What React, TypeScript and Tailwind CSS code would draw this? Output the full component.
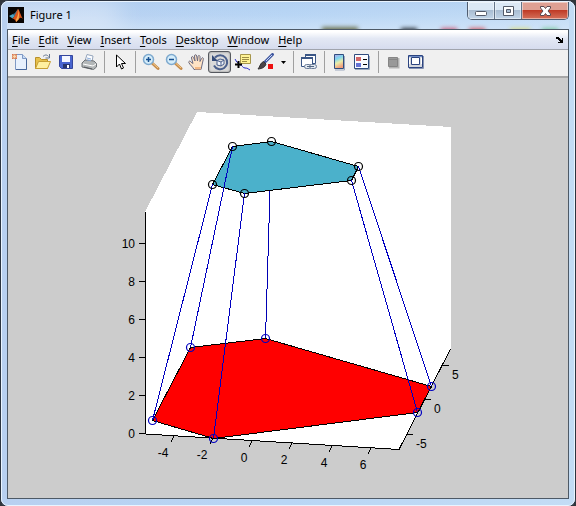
import type { ReactNode } from 'react';
import { clsx } from 'clsx';

const menus = ['File', 'Edit', 'View', 'Insert', 'Tools', 'Desktop', 'Window', 'Help'];

type Point = [number, number];

const topFace: Point[] = [[212, 184], [232, 146], [271, 141], [358, 166], [351, 180], [244, 193]];
const baseFace: Point[] = [[152, 420], [190, 347], [265, 338], [431, 386], [417, 412], [213, 438]];

const zTicks = [
  { label: '0', y: 434 },
  { label: '2', y: 396 },
  { label: '4', y: 358 },
  { label: '6', y: 320 },
  { label: '8', y: 282 },
  { label: '10', y: 244 },
];

const xTicks = [
  { label: '-4', x: 174, y: 436 },
  { label: '-2', x: 213, y: 438 },
  { label: '0', x: 252, y: 441 },
  { label: '2', x: 292, y: 443 },
  { label: '4', x: 332, y: 446 },
  { label: '6', x: 371, y: 448 },
];

const yTicks = [
  { label: '5', x: 443, y: 365 },
  { label: '0', x: 425, y: 399 },
  { label: '-5', x: 407, y: 434 },
];

const toPoints = (pts: Point[]) => pts.map((p) => p.join(',')).join(' ');

export default function App() {
  return (
    <div className="flex min-h-screen flex-col bg-[#30353b] font-['Noto_Sans','Open_Sans',sans-serif] text-[11px] text-black">
      <div className="flex flex-1 flex-col rounded-lg border border-[#2c3440] bg-[#b5cfef]">
        <div className="flex flex-1 flex-col rounded-[7px] border border-[#e9f4ff] bg-linear-to-r from-[#b8d0f0] via-[#b9d6f5] to-[#c3dcf5] px-[5px] pb-[6px]">
          <TitleBar />
          <main className="flex flex-1 flex-col border border-[#4d5966] bg-[#cccccc]">
            <MenuBar />
            <Toolbar />
            <Plot />
          </main>
        </div>
      </div>
    </div>
  );
}

function TitleBar() {
  return (
    <header className="relative flex h-[27px] items-start justify-between overflow-hidden">
      <div className="pointer-events-none absolute inset-0">
        <div className="absolute inset-0 bg-linear-to-b from-[#a9c9ee]/40 via-transparent to-[#dbeafa]/50" />
        <div className="absolute top-0 left-0 h-7 w-28 bg-white/40 blur-md" />
        <div className="absolute top-[25px] left-[56%] h-3 w-9 bg-[#6f7657] blur-[2px]" />
        <div className="absolute top-[26px] right-[27%] h-3 w-4 bg-[#2f3740] blur-[2px]" />
        <div className="absolute top-[26px] right-[20%] h-3 w-4 bg-[#c9607c] blur-[2px]" />
        <div className="absolute top-[26px] right-[15%] h-3 w-4 bg-[#d3606a] blur-[2px]" />
        <div className="absolute top-[26px] right-[7%] h-3 w-5 bg-[#d8dc8a] blur-[2px]" />
        <div className="absolute top-[26px] right-[2%] h-3 w-4 bg-[#7fc9a4] blur-[2px]" />
      </div>
      <div className="relative flex items-center gap-[6px] pt-[5px] pl-px">
        <MatlabIcon />
        <h1 className="text-[11px] leading-4">Figure 1</h1>
      </div>
      <div className="relative flex h-[18px] overflow-hidden rounded-b-[5px] border border-t-0 border-[#4f5d70]">
        <CaptionButton label="Minimize">
          <rect x="6.5" y="8.5" width="11" height="4" rx="1" fill="#fff" stroke="#535a68" />
        </CaptionButton>
        <CaptionButton label="Maximize">
          <path d="M7.500 3.500h10v9h-10zM10.500 6.500v3h4v-3z" fill="#fff" fillRule="evenodd" stroke="#535a68" />
        </CaptionButton>
        <CaptionButton label="Close" close>
          <path
            d="M7.500 3.500h3.500l1.500 2 1.500-2h3.500v1.500L15 8l2.500 3v1.500H14l-1.500-2-1.500 2H7.500V11L10 8 7.500 5z"
            fill="#fff"
            stroke="#5b4950"
          />
        </CaptionButton>
      </div>
    </header>
  );
}

function CaptionButton({ label, close, children }: { label: string; close?: boolean; children: ReactNode }) {
  return (
    <button
      aria-label={label}
      className={clsx(
        'flex h-full items-center justify-center shadow-[inset_0_0_0_1px_rgba(255,255,255,0.45)]',
        close
          ? 'w-[46px] bg-linear-to-b from-[#dfa093] from-45% via-[#bf3b26] via-50% to-[#d5705a]'
          : 'w-[27px] border-r border-[#64758a] bg-linear-to-b from-[#dbe8f5] from-45% via-[#a9bdd2] via-50% to-[#c3d6e9]'
      )}
    >
      <svg viewBox="0 0 24 16" className="h-4 w-6 shrink-0">{children}</svg>
    </button>
  );
}

function MatlabIcon() {
  return (
    <svg viewBox="0 0 16 16" className="size-4" aria-hidden="true">
      <rect width="16" height="16" fill="#080504" />
      <path d="M1 9l4-2 2 2-2.500 2.500z" fill="#4aa3c4" />
      <path d="M5 7c2 0 3-3 5-5L8.500 8 6.500 9.500z" fill="#347392" />
      <path d="M4.500 11.500C7 10 8 5 10 2c1.500 1 2.500 6 5 10-2-2-3-1.500-4.500.500L8 15c-.500-2-1.500-3-3.500-3.500z" fill="#d9541c" />
      <path d="M10 2c.500 3 .500 6-2 10.500V15l2.500-2.500C11.500 9 11 4 10 2z" fill="#f8a848" />
    </svg>
  );
}

function MenuBar() {
  return (
    <nav
      aria-label="Menu bar"
      className="flex h-5 items-center justify-between border-b border-[#a0a4ad] bg-linear-to-b from-white from-10% via-[#e3e8f4] via-45% to-[#d6dcee] px-1"
    >
      <div className="flex gap-[9px]">
        {menus.map((name) => (
          <button key={name} className="leading-4">
            <span className="underline underline-offset-2">{name[0]}</span>
            {name.slice(1)}
          </button>
        ))}
      </div>
      <button aria-label="Dock figure">
        <svg viewBox="0 0 8 8" className="size-2" shapeRendering="crispEdges">
          <path d="M0 1h3v1h1v1h1v1h1V2h1v5H2V6h2V5H3V4H2V3H0z" />
        </svg>
      </button>
    </nav>
  );
}

function Toolbar() {
  return (
    <div role="toolbar" className="flex h-7 items-center border-b-2 border-[#a7a7a7] bg-[#f0f0f0] pb-[2px]">
      <Tool label="New figure">
        <path d="M4.500 1.500h7l4 4v11h-11z" fill="#e8f1fd" stroke="#7f99c4" />
        <path d="M5 16.500h10.500v-11" fill="none" stroke="#48689c" />
        <path d="M11.500 1.500v4h4" fill="#cadcf3" stroke="#7f99c4" />
        <circle cx="3.500" cy="3.500" r="2" fill="#fbd7a8" stroke="#d9764a" />
        <path d="M1 1l1 1M6 1L5 2M1 6l1-1M6 6L5 5" stroke="#d9764a" />
      </Tool>
      <Tool label="Open file">
        <path d="M1.500 15.500v-11h4l2 2h6v9z" fill="#e7c14b" stroke="#b8902a" />
        <path d="M1.500 15.500l3-7h12l-3 7z" fill="#fff0a0" stroke="#c79f35" />
        <path d="M9 3.500c2-2 4-2 5.500 0M15.500 1v4h-4" fill="none" stroke="#667690" />
      </Tool>
      <Tool label="Save figure">
        <path d="M2.500 2.500h13v13h-11l-2-2z" fill="#4965cf" stroke="#35479c" />
        <path d="M5 3h8v6H5z" fill="#f4f7ff" />
        <path d="M6 11h7v4H6z" fill="#28366d" />
        <path d="M10 12h2v3h-2z" fill="#fff" />
      </Tool>
      <Tool label="Print figure">
        <path d="M5 8l2-6.500 6 1.500-1 6z" fill="#fcfdff" stroke="#94a5bc" />
        <path d="M2 10l3-3 9 1 2.500 2.500V14l-3 2.500L2 14z" fill="#b3b7b8" stroke="#6d7276" />
        <path d="M3 11l10 2 3-2" fill="none" stroke="#fff" />
        <path d="M4 14l8 2" stroke="#55595e" />
        <path d="M7 5l4 1M7 7l4 .500" stroke="#8cadd9" />
      </Tool>
      <Separator />
      <Tool label="Edit plot">
        <path d="M5.500 2v12l3-3 2 5 2-1-2-4.500h4z" fill="#fff" stroke="#000" />
      </Tool>
      <Separator />
      <Tool label="Zoom in">
        <Magnifier />
        <path d="M6.500 4v5M4 6.500h5" stroke="#164f91" strokeWidth="1.500" />
      </Tool>
      <Tool label="Zoom out">
        <Magnifier />
        <path d="M4 6.500h5" stroke="#164f91" strokeWidth="1.500" />
      </Tool>
      <Tool label="Pan">
        <path
          d="M6 16.500C5 14 2 12 .800 9.500.500 8 2 7.500 3 9l2 1.500L3.500 5c-.300-1.700 1.500-2 2-.500L7 8 6.500 3c0-1.700 2-1.700 2.200 0L9.500 8l.500-4.500c.200-1.600 2-1.300 2 .300L12 8.500l1.500-3c.700-1.400 2.300-.800 1.800.800L14 12l-1 4.500z"
          fill="#ffe3c4"
          stroke="#6b6a80"
        />
        <path d="M7 14h6v2.500H7z" fill="#f4b985" />
      </Tool>
      <Tool label="Rotate 3D" pressed>
        <path d="M4 4.500a7 7 0 1 1-1 8" fill="none" stroke="#4a5f8c" strokeWidth="2" />
        <path d="M1 2v6h6z" fill="#354b78" />
        <path d="M6 7.500l3-1.500 4 1v4l-3 2-4-1zM6 7.500l4 1.500 3-2M10 9v4" fill="#eef3fb" stroke="#4a5f8c" />
      </Tool>
      <Tool label="Data cursor">
        <path d="M6.500 1.500h10v9h-10z" fill="#fff395" stroke="#a6964c" />
        <path d="M8 4.500h7M8 6.500h7M8 8.500h5" stroke="#9c8d45" />
        <path d="M1 6c1 1 1 3 3 4M6 12c3 0 2 3 5 3s3 1 5 2" fill="none" stroke="#2929c8" />
        <path d="M4.500 8v7M1 11.500h7" stroke="#000" strokeWidth="2" />
      </Tool>
      <Tool label="Brush data">
        <path d="M15.500 1.500L8 9" stroke="#4259a0" strokeWidth="3" strokeLinecap="round" />
        <path d="M15 2L9 8" stroke="#c4d4f6" />
        <path d="M6.500 8.500L9 11c-1 3-3 4.500-8 5 2-2 2-6 5.500-7.500z" fill="#4b4447" stroke="#333" />
        <path d="M11 11h5v5h-5z" fill="#ed1111" />
      </Tool>
      <button aria-label="Brush colors" className="flex h-[22px] w-3 items-center justify-center">
        <svg viewBox="0 0 5 3" className="h-[3px] w-[5px]"><path d="M0 0h5L2.500 3z" /></svg>
      </button>
      <Separator />
      <Tool label="Link plot">
        <path d="M5.500 1.500h10v9h-10z" fill="#fff" stroke="#3a5686" />
        <path d="M5 2h11" stroke="#3a5686" strokeWidth="2" />
        <path d="M1.500 4.500h11v9h-11z" fill="#fff" stroke="#3a5686" />
        <path d="M1 5h12" stroke="#3a5686" strokeWidth="2" />
        <rect x="4.500" y="11.500" width="7" height="4" rx="2" fill="#e2e9f1" stroke="#6b7c98" />
        <rect x="9.500" y="11.500" width="7" height="4" rx="2" fill="#e2e9f1" stroke="#6b7c98" />
        <path d="M7 13.500h7" stroke="#526682" />
      </Tool>
      <Separator />
      <Tool label="Insert colorbar">
        <defs>
          <linearGradient id="bar" x2="0.300" y2="1">
            <stop stopColor="#b7a2e8" />
            <stop offset=".35" stopColor="#7fd5ee" />
            <stop offset=".65" stopColor="#e9edaa" />
            <stop offset="1" stopColor="#f2a07c" />
          </linearGradient>
        </defs>
        <path d="M13.500 3v14H4" fill="none" stroke="#9ba8bd" />
        <path d="M3.500 1.500h9v14h-9z" fill="url(#bar)" stroke="#304c7e" />
      </Tool>
      <Tool label="Insert legend">
        <path d="M1 16.500h14.500V3" fill="none" stroke="#9ba8bd" />
        <path d="M.500 1.500h14v14h-14z" fill="#fafbff" stroke="#304c7e" />
        <path d="M2 4h5v4H2z" fill="#d36768" />
        <path d="M2 10h5v4H2z" fill="#6573d5" />
        <path d="M9 6.500h4M9 11.500h4" stroke="#000" />
      </Tool>
      <Separator />
      <Tool label="Hide plot tools" disabled>
        <path d="M4 14.500h9.500V5" fill="none" stroke="#b3b3b3" strokeWidth="2" />
        <path d="M3.500 4.500h9v9h-9z" fill="#999" stroke="#858585" />
        <path d="M4 6.500h8" stroke="#858585" />
      </Tool>
      <Tool label="Show plot tools and dock figure">
        <path d="M1 15.500h14.500V3" fill="none" stroke="#8794b3" />
        <path d="M.500 2.500h14v12h-14z" fill="#d5d8de" stroke="#2c4480" />
        <path d="M1 3.500h13" stroke="#6e8cc6" />
        <path d="M1.500 5v6M13.500 5v6" stroke="#fff" />
        <path d="M3.500 4.500h8v7h-8z" fill="#fff" stroke="#2c4480" />
      </Tool>
    </div>
  );
}

function Magnifier() {
  return (
    <>
      <path d="M10 10l6 5.500" stroke="#c58b4c" strokeWidth="3" strokeLinecap="round" />
      <path d="M10.500 10l5.500 5" stroke="#f6cd8a" />
      <circle cx="6.500" cy="6.500" r="5" fill="#d5edfa" stroke="#7ea9ce" strokeWidth="1.500" />
    </>
  );
}

function Tool({
  label,
  pressed,
  disabled,
  children,
}: {
  label: string;
  pressed?: boolean;
  disabled?: boolean;
  children: ReactNode;
}) {
  return (
    <button
      aria-label={label}
      aria-pressed={pressed}
      disabled={disabled}
      className={clsx(
        'flex h-[22px] w-[23px] items-center justify-center rounded-[3px] border',
        pressed ? 'border-[#55585e] bg-[#dadada] shadow-[inset_0_0_2px_#777]' : 'border-transparent'
      )}
    >
      <svg viewBox="0 0 18 18" className="size-[18px] shrink-0">{children}</svg>
    </button>
  );
}

function Separator() {
  return (
    <div className="flex h-[22px] w-2 justify-center">
      <div className="w-px bg-[#a0a0a0]" />
    </div>
  );
}

function Plot() {
  return (
    <svg
      viewBox="8 78 560 420"
      className="w-full bg-[#cccccc] font-['Liberation_Sans',Arial,sans-serif] text-[12px]"
      role="img"
      aria-label="3-D plot"
    >
      <g shapeRendering="crispEdges">
        <path d="M145 212L197 112 451 127V349L399 449 145 434z" fill="#fff" />
        <path d="M145.500 212V434L399 449.500 450.500 349" fill="none" stroke="#000" />
        {zTicks.map((t) => (
          <path key={t.label} d={`M139 ${t.y - 0.5}h6`} stroke="#000" />
        ))}
        {xTicks.map((t) => (
          <path key={t.label} d={`M${t.x} ${t.y}l-3 6`} stroke="#000" />
        ))}
        {yTicks.map((t) => (
          <path key={t.label} d={`M${t.x} ${t.y + 0.5}h6`} stroke="#000" />
        ))}
      </g>

      {/* shift onto pixel centres so the one-pixel strokes stay sharp */}
      <g transform="translate(0.5 0.5)" shapeRendering="crispEdges">
        <polygon points={toPoints(baseFace)} fill="#ff0000" stroke="#000" />
        {/* back leg, hidden by the top face */}
        <path d="M271 141L265 338" stroke="#0000b4" />
        <polygon points={toPoints(topFace)} fill="#4bb1cb" stroke="#000" />
        {topFace.map(([x, y], i) =>
          i === 2 ? null : (
            <path key={i} d={`M${x} ${y}L${baseFace[i][0]} ${baseFace[i][1]}`} stroke="#0000c0" />
          )
        )}
      </g>
      <g transform="translate(0.5 0.5)" fill="none" strokeWidth="1.200">
        {topFace.map(([x, y]) => (
          <circle key={x} cx={x} cy={y} r="4" stroke="#000" />
        ))}
        {baseFace.map(([x, y]) => (
          <circle key={x} cx={x} cy={y} r="4" stroke="#0000c0" />
        ))}
      </g>

      <g textAnchor="end">
        {zTicks.map((t) => (
          <text key={t.label} x={135} y={t.y + 4}>{t.label}</text>
        ))}
      </g>
      <g textAnchor="middle">
        {xTicks.map((t) => (
          <text key={t.label} x={t.label.length > 1 ? t.x - 11 : t.x - 8} y={t.y + 21}>{t.label}</text>
        ))}
      </g>
      {yTicks.map((t) => (
        <text key={t.label} x={t.x + 9} y={t.y + 14}>{t.label}</text>
      ))}
    </svg>
  );
}
